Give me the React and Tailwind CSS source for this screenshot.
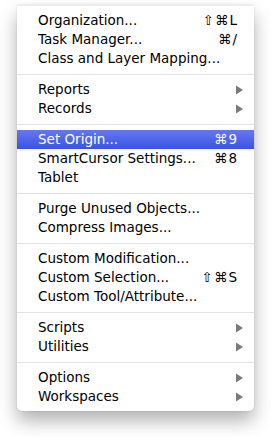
const groups = [
  [
    { label: "Organization...", key: "⇧⌘L" },
    { label: "Task Manager...", key: "⌘/" },
    { label: "Class and Layer Mapping..." },
  ],
  [
    { label: "Reports", sub: true },
    { label: "Records", sub: true },
  ],
  [
    { label: "Set Origin...", key: "⌘9", active: true },
    { label: "SmartCursor Settings...", key: "⌘8" },
    { label: "Tablet" },
  ],
  [{ label: "Purge Unused Objects..." }, { label: "Compress Images..." }],
  [
    { label: "Custom Modification..." },
    { label: "Custom Selection...", key: "⇧⌘S" },
    { label: "Custom Tool/Attribute..." },
  ],
  [
    { label: "Scripts", sub: true },
    { label: "Utilities", sub: true },
  ],
  [
    { label: "Options", sub: true },
    { label: "Workspaces", sub: true },
  ],
];

function Arrow({ active }) {
  return (
    <svg width="7" height="10" viewBox="0 0 7 10" className="mr-[-5px]">
      <path d="M0 0.5 L7 5 L0 9.5 Z" fill={active ? "#fff" : "#7a7a7a"} />
    </svg>
  );
}

function Item({ item }) {
  return (
    <div
      className={`flex items-center justify-between h-[19px] pl-[21px] pr-[16px] ${
        item.active
          ? "bg-gradient-to-b from-[#6478ef] to-[#3b52e6] text-white"
          : "text-black"
      }`}
    >
      <span>{item.label}</span>
      {item.key && <span className="tracking-[1px]">{item.key}</span>}
      {item.sub && <Arrow active={item.active} />}
    </div>
  );
}

export default function App() {
  return (
    <div className="w-[271px] h-[437px] bg-white pt-[5px] pl-[17px]">
      <div
        className="w-[237px] bg-white rounded-b-[5px] py-[5px] border-t border-[#ededed] shadow-[0_10px_18px_rgba(0,0,0,0.3),0_0_2px_rgba(0,0,0,0.15)] text-[13.5px] leading-[19px]"
        style={{ fontFamily: '"DejaVu Sans", sans-serif' }}
      >
        {groups.map((g, gi) => (
          <div key={gi}>
            {gi > 0 && (
              <div className="h-[12px] flex items-center">
                <div className="w-full h-px bg-[#e3e3e3]" />
              </div>
            )}
            {g.map((item) => (
              <Item key={item.label} item={item} />
            ))}
          </div>
        ))}
      </div>
    </div>
  );
}
